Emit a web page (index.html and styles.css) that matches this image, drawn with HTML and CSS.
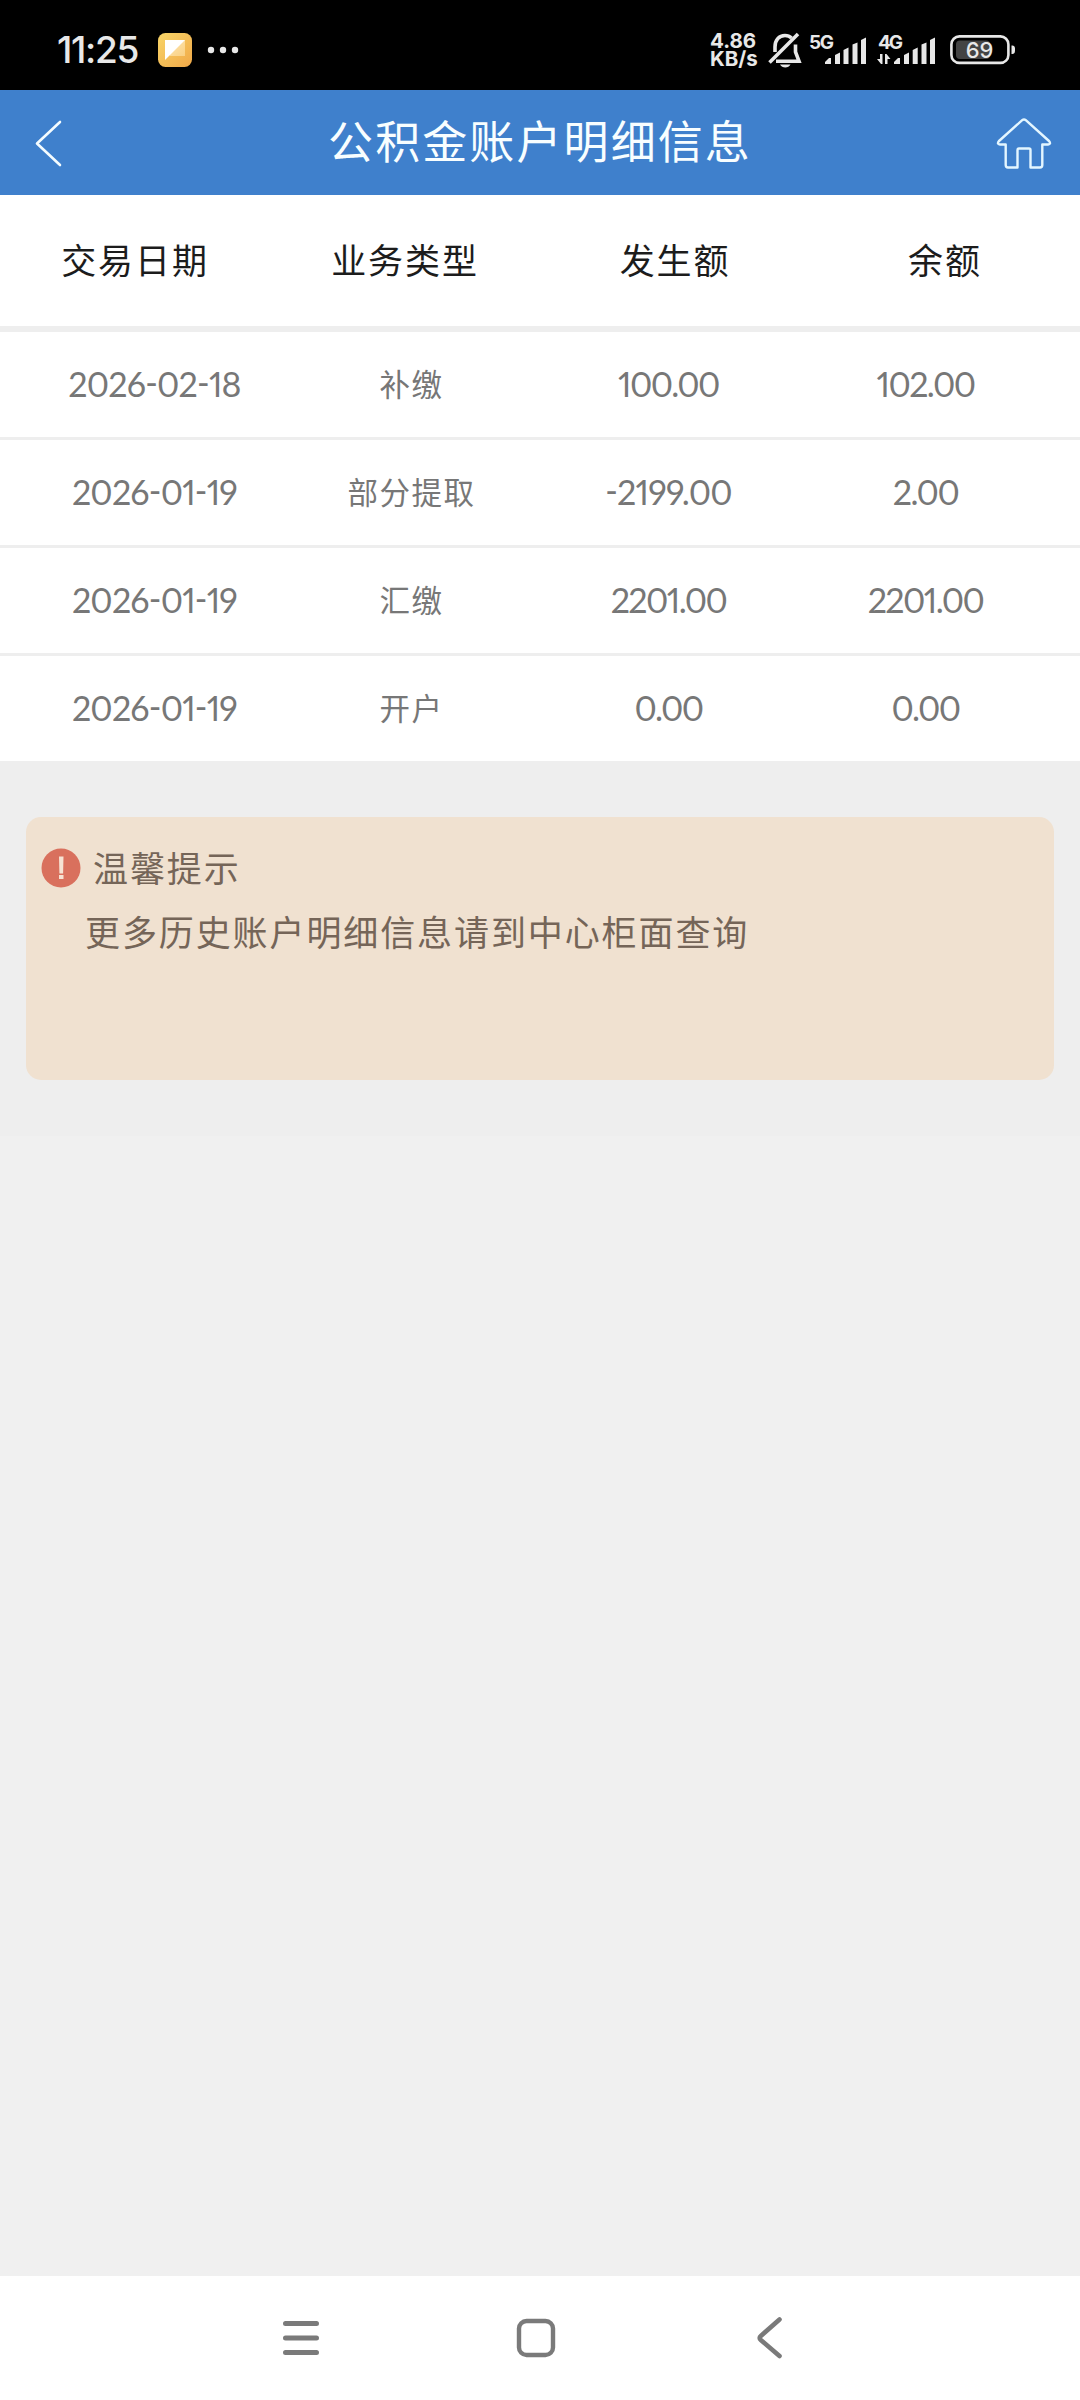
FILE: index.html
```html
<!DOCTYPE html>
<html lang="zh-CN">
<head>
<meta charset="utf-8">
<title>公积金账户明细信息</title>
<link rel="stylesheet" href="styles.css">
</head>
<body>
<div class="screen">
  <div class="status">
    <span class="clock">11:25</span>
    <svg class="app-icon" width="34" height="34" viewBox="0 0 34 34">
      <defs>
        <linearGradient id="app" x1="0" y1="0" x2="1" y2="1"><stop offset="0" stop-color="#f8d568"/><stop offset="1" stop-color="#f0a848"/></linearGradient>
        <linearGradient id="fold" x1="0" y1="0" x2="1" y2="1"><stop offset="0" stop-color="#ffe9b8"/><stop offset="1" stop-color="#f9d083"/></linearGradient>
      </defs>
      <rect width="34" height="34" rx="7.5" fill="url(#app)"/>
      <path d="M7 7h20v16H12z" fill="url(#fold)"/>
      <path d="M7 7h20L7 27z" fill="#fff"/>
    </svg>
    <svg class="dots" width="32" height="8" viewBox="0 0 32 8" fill="#e8e8e8"><circle cx="4" cy="4" r="3.2"/><circle cx="16" cy="4" r="3.2"/><circle cx="28" cy="4" r="3.2"/></svg>
    <div class="speed"><span>4.86</span><span>KB/s</span></div>
    <svg class="bell" width="34" height="36" viewBox="0 0 34 36" fill="none" stroke="#e8e8e8" stroke-width="3.6">
      <path d="M7 20V15C7 8 11 3.5 17 3.5c3 0 5 1 6.500 2.500M27.500 12.500V20l3.500 9.200H8"/>
      <path d="M1.500 30.500L30 2"/>
      <path d="M12 32.500h10.500c-1 2-3 3-5.200 3s-4.300-1-5.300-3z" fill="#e8e8e8" stroke="none"/>
    </svg>
    <svg class="signal" width="58" height="40" viewBox="0 -4 58 40" fill="#e8e8e8">
      <text class="net" x="0" y="14.500" textLength="25">5G</text>
      <path d="M16 30v-2l4-4h2v6zM26 30v-9l5-2.500V30zM34.500 30V16l5-2.500V30zM43.500 30V10.500l5-2V30zM52 30V6l5-2.500V30z"/>
    </svg>
    <svg class="signal signal-two" width="60" height="40" viewBox="0 -4 60 40" fill="#e8e8e8">
      <text class="net" x="1" y="14.500" textLength="25">4G</text>
      <path d="M17 30v-2l4-4h2v6zM27 30v-9l5-2.500V30zM35.700 30V16l5-2.500V30zM44.500 30V10.500l5-2V30zM53 30V6l5-2.500V30z"/>
      <path d="M0 25h3v-5h2.500v10H4zM8 20h1.500l4 5h-3v5H8z"/>
    </svg>
    <svg class="battery" width="66" height="30" viewBox="0 0 66 30">
      <rect x="1.400" y="1.400" width="57" height="26.500" rx="8" fill="none" stroke="#e8e8e8" stroke-width="2.600"/>
      <rect x="6" y="5.500" width="34" height="18.500" rx="4" fill="#444"/>
      <path d="M61.500 10.500c3 0 3.500 1 3.500 4.200s-.5 4.300-3.500 4.300z" fill="#e8e8e8"/>
      <text class="level" x="29.500" y="22.500">69</text>
    </svg>
  </div>

  <header class="bar">
    <svg class="back" width="28" height="48" viewBox="0 0 28 48" fill="none" stroke="#f4fcff" stroke-width="2.600" stroke-linecap="round" stroke-linejoin="round"><path d="M25 3L2 24.500l23 21.500"/></svg>
    <h1 class="title">公积金账户明细信息</h1>
    <svg class="home" width="56" height="54" viewBox="0 -1 56 54" fill="none" stroke="#e4f6ff" stroke-width="2.400" stroke-linejoin="round"><path d="M26.200 3.200Q28 1.700 29.800 3.200L53 24Q55.500 27.200 52 27.500H46.300V48Q46.300 50.500 44 50.500H34.500V33Q34.500 31.500 33 31.500H23Q21.500 31.500 21.500 33V50.500H12Q9.700 50.500 9.700 48V27.500H4Q.5 27.200 3 24z"/></svg>
  </header>

  <div class="row head"><span>交易日期</span><span>业务类型</span><span>发生额</span><span>余额</span></div>
  <div class="list">
    <div class="row"><span class="date">2026-02-18</span><span>补缴</span><span class="num">100.00</span><span class="num">102.00</span></div>
    <div class="row"><span class="date">2026-01-19</span><span>部分提取</span><span class="num negative">-2199.00</span><span class="num">2.00</span></div>
    <div class="row"><span class="date">2026-01-19</span><span>汇缴</span><span class="num">2201.00</span><span class="num">2201.00</span></div>
    <div class="row"><span class="date">2026-01-19</span><span>开户</span><span class="num">0.00</span><span class="num">0.00</span></div>
  </div>

  <div class="tip-area">
    <section class="tip">
      <div class="tip-title">
        <svg width="40" height="40" viewBox="0 0 40 40"><circle cx="20" cy="20" r="19.500" fill="#d9705d"/><path d="M18 8.500h4.500l-.4 17h-3.700zM18 27h4.500v4H18z" fill="#f6e2d3"/></svg>
        <span>温馨提示</span>
      </div>
      <p class="tip-text">更多历史账户明细信息请到中心柜面查询</p>
    </section>
  </div>

  <nav class="nav">
    <svg width="40" height="42" viewBox="0 0 40 42" stroke="#7a7a7a" stroke-width="5" stroke-linecap="round"><path d="M4.500 6.500h31M4.500 21h31M4.500 35.500h31"/></svg>
    <svg width="40" height="42" viewBox="0 0 40 42" fill="none" stroke="#7a7a7a" stroke-width="4.400"><rect x="3" y="4" width="34" height="34" rx="7.500"/></svg>
    <svg width="40" height="42" viewBox="0 0 40 42" fill="none" stroke="#7a7a7a" stroke-width="4.600" stroke-linecap="round" stroke-linejoin="round"><path d="M28.500 2.500L9.800 19Q7.500 21 9.800 23L28.500 39"/></svg>
  </nav>
</div>
</body>
</html>
```
FILE: styles.css
```css
* { box-sizing: border-box; }
body { margin: 0; background: #f0f0f0; font-family: Lato, "Noto Sans CJK SC", sans-serif; }
svg { display: block; flex: none; }
.screen { width: 1080px; height: 2400px; display: flex; flex-direction: column; overflow: hidden; }

.status { height: 90px; background: #000; color: #e8e8e8; display: flex; align-items: center; padding: 10px 64px 0 57px; font-family: Inter, sans-serif; }
.clock { width: 101px; font-size: 37px; font-weight: 500; line-height: 40px; letter-spacing: -1.3px; }
.dots { margin-left: 15px; }
.speed { margin-left: auto; width: 50px; display: flex; flex-direction: column; font-size: 20.5px; font-weight: 700; line-height: 18.5px; white-space: nowrap; letter-spacing: 0; }
.bell { margin-left: 8px; }
.signal { margin-left: 7px; }
.signal-two { margin-left: 10px; }
.net { font: 700 19px Inter, sans-serif; }
.battery { margin-left: 13px; }
.level { font: 500 22px Inter, sans-serif; fill: #e8e8e8; text-anchor: middle; }

.bar { height: 105px; background: #3f80cc; display: flex; align-items: center; justify-content: space-between; padding: 0 28px 0 35px; }
.title { margin: 0; font-size: 45px; line-height: 60px; font-weight: 400; letter-spacing: 2.1px; color: #f8feff; padding: 0 0 1px 21px; }

.row { display: grid; grid-template-columns: repeat(4, 1fr); align-items: center; text-align: center; background: #fff; height: 105px; padding: 0 26px 3px; font-size: 30.5px; letter-spacing: 1.5px; color: #777; }
.row.head { height: 131px; padding: 0 0 5px; font-size: 35px; letter-spacing: 1.9px; color: #1c1c1c; }
.list { display: flex; flex-direction: column; gap: 3px; padding-top: 6px; background: #eee; }
.row .date, .row .num { font-size: 34px; letter-spacing: -0.8px; font-variant-numeric: proportional-nums; font-feature-settings: "case"; }
.row .num { letter-spacing: -1.6px; }
.row .negative { letter-spacing: -0.8px; }

.tip-area { height: 375px; background: #eee; padding: 56px 26px; }
.tip { height: 263px; border-radius: 15px; background: #f0e1d0; color: #756558; font-size: 35px; letter-spacing: 1.9px; padding: 28px 15px; }
.tip-title { display: flex; align-items: center; gap: 12px; height: 46px; }
.tip-title span { padding-bottom: 4px; }
.tip-text { margin: 16px 0 0 44px; line-height: 50px; }

.nav { margin-top: auto; height: 124px; background: #fff; display: flex; align-items: center; justify-content: space-between; padding: 0 289px 0 281px; }
```
